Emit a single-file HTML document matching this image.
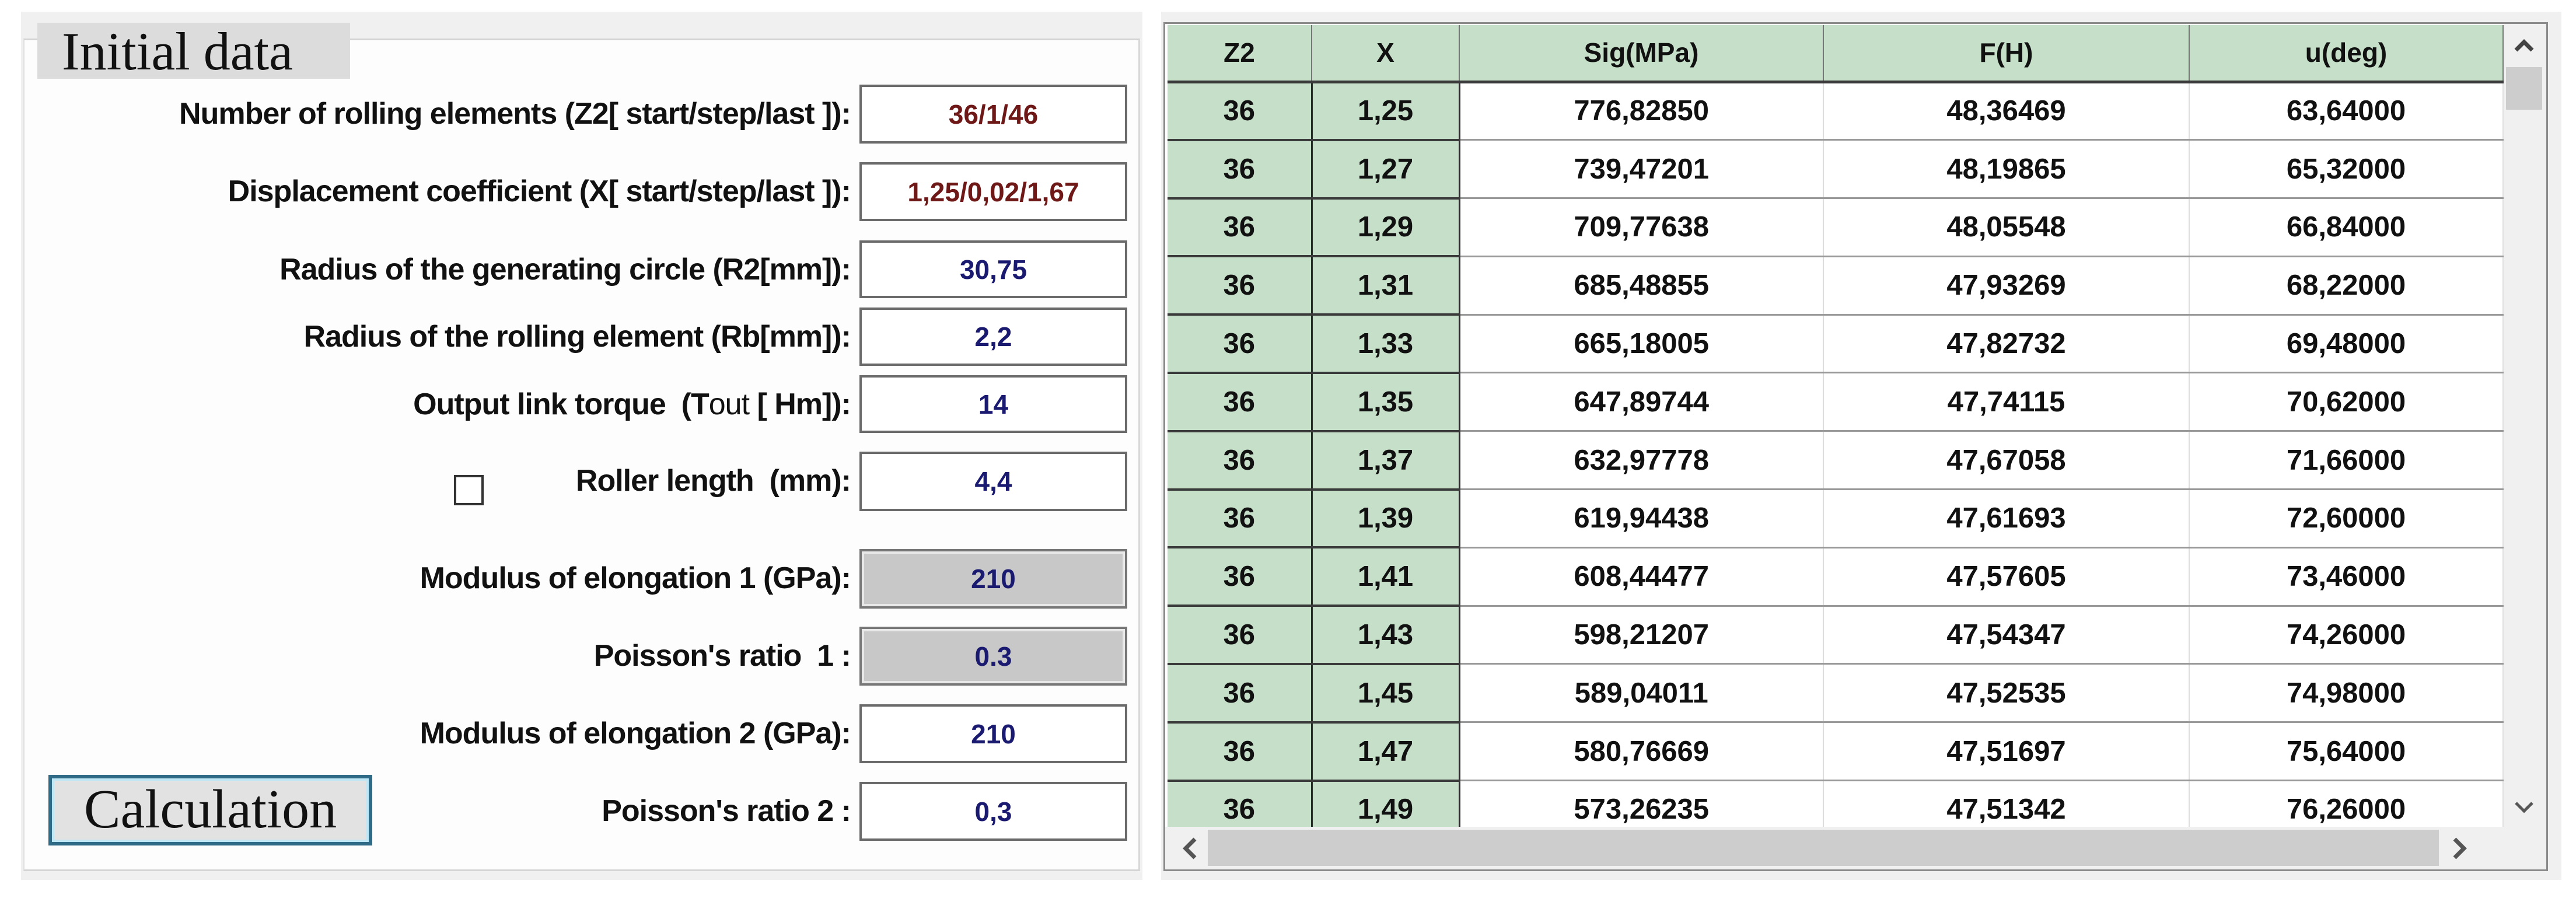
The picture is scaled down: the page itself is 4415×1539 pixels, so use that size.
<!DOCTYPE html>
<html><head><meta charset="utf-8"><style>
*{margin:0;padding:0;box-sizing:border-box}
body{width:4415px;height:1539px;background:#fff;position:relative;overflow:hidden;font-family:"Liberation Sans",sans-serif}
.a{position:absolute}
.lbl{position:absolute;right:2957px;font-weight:bold;font-size:52px;color:#111;white-space:nowrap;text-align:right;line-height:100px;letter-spacing:-1px}
.inp{position:absolute;left:1473px;width:459px;border:4px solid #6a6a6a;background:#fff;text-align:center;font-weight:bold;font-size:46px;color:#1a1a70;display:flex;align-items:center;justify-content:center}
.red{color:#6e1818}
.gray{background:#c8c8c8;border-color:#777;box-shadow:inset 0 0 0 4px #e8e8e8}
table{border-collapse:collapse;position:absolute;left:2001px;top:43px;table-layout:fixed}
td{height:99.8px;text-align:center;font-weight:bold;font-size:49px;color:#111;border-bottom:3px solid #999;border-right:2px solid #ddd;padding:0}
tr td:nth-child(1),tr td:nth-child(2){background:#c6dfc8;border-bottom:4px solid #3a3a3a;border-right:3px solid #2a2a2a}
tr.h td{background:#c6dfc8;height:97px;border-bottom:5px solid #3a3a3a;border-right:2px solid #777;font-size:46px}
</style></head><body>
<!-- left panel -->
<div class="a" style="left:36px;top:20px;width:1922px;height:1488px;background:#f0f0f0"></div>
<div class="a" style="left:40px;top:66px;width:1914px;height:1427px;background:#fdfdfd;border-top:3px solid #d4d4d4;border-bottom:3px solid #d4d4d4;border-right:3px solid #d8d8d8;border-left:2px solid #e0e0e0"></div>
<div class="a" style="left:64px;top:39px;width:536px;height:96px;background:#dcdcdc"></div>
<div class="a" style="left:106px;top:42px;font-family:'Liberation Serif',serif;font-size:92px;color:#111;line-height:1">Initial data</div>

<div class="lbl" style="top:145px">Number of rolling elements (Z2[ start/step/last ]):</div>
<div class="inp red" style="top:145px;height:101px">36/1/46</div>
<div class="lbl" style="top:278px">Displacement coefficient (X[ start/step/last ]):</div>
<div class="inp red" style="top:278px;height:101px">1,25/0,02/1,67</div>
<div class="lbl" style="top:412px">Radius of the generating circle (R2[mm]):</div>
<div class="inp" style="top:412px;height:99px">30,75</div>
<div class="lbl" style="top:527px">Radius of the rolling element (Rb[mm]):</div>
<div class="inp" style="top:527px;height:100px">2,2</div>
<div class="lbl" style="top:643px">Output link torque &nbsp;(T<span style="font-weight:normal">out</span> [ Hm]):</div>
<div class="inp" style="top:643px;height:99px">14</div>
<div class="a" style="left:778px;top:814px;width:51px;height:52px;border:4px solid #333;background:#fff"></div>
<div class="lbl" style="top:774px">Roller length &nbsp;(mm):</div>
<div class="inp" style="top:774px;height:102px">4,4</div>
<div class="lbl" style="top:941px">Modulus of elongation 1 (GPa):</div>
<div class="inp gray" style="top:941px;height:102px">210</div>
<div class="lbl" style="top:1074px">Poisson's ratio &nbsp;1 :</div>
<div class="inp gray" style="top:1074px;height:101px">0.3</div>
<div class="lbl" style="top:1207px">Modulus of elongation 2 (GPa):</div>
<div class="inp" style="top:1207px;height:101px">210</div>
<div class="lbl" style="top:1340px">Poisson's ratio 2 :</div>
<div class="inp" style="top:1340px;height:101px">0,3</div>
<div class="a" style="left:83px;top:1328px;width:555px;height:121px;border:6px solid #2f6b86;background:#e2e2e2;box-shadow:inset 0 0 0 4px #bfe6f5;font-family:'Liberation Serif',serif;font-size:94px;color:#111;text-align:center;line-height:106px">Calculation</div>

<!-- right panel -->
<div class="a" style="left:1990px;top:20px;width:2400px;height:1488px;background:#f0f0f0"></div>
<div class="a" style="left:1994px;top:38px;width:2373px;height:1455px;background:#fff;border:3px solid #8a8a8a"></div>
<table>
<colgroup><col style="width:247px"><col style="width:253px"><col style="width:624px"><col style="width:627px"><col style="width:538px"></colgroup>
<tr class="h"><td>Z2</td><td>X</td><td>Sig(MPa)</td><td>F(H)</td><td>u(deg)</td></tr>
<tr><td>36</td><td>1,25</td><td>776,82850</td><td>48,36469</td><td>63,64000</td></tr>
<tr><td>36</td><td>1,27</td><td>739,47201</td><td>48,19865</td><td>65,32000</td></tr>
<tr><td>36</td><td>1,29</td><td>709,77638</td><td>48,05548</td><td>66,84000</td></tr>
<tr><td>36</td><td>1,31</td><td>685,48855</td><td>47,93269</td><td>68,22000</td></tr>
<tr><td>36</td><td>1,33</td><td>665,18005</td><td>47,82732</td><td>69,48000</td></tr>
<tr><td>36</td><td>1,35</td><td>647,89744</td><td>47,74115</td><td>70,62000</td></tr>
<tr><td>36</td><td>1,37</td><td>632,97778</td><td>47,67058</td><td>71,66000</td></tr>
<tr><td>36</td><td>1,39</td><td>619,94438</td><td>47,61693</td><td>72,60000</td></tr>
<tr><td>36</td><td>1,41</td><td>608,44477</td><td>47,57605</td><td>73,46000</td></tr>
<tr><td>36</td><td>1,43</td><td>598,21207</td><td>47,54347</td><td>74,26000</td></tr>
<tr><td>36</td><td>1,45</td><td>589,04011</td><td>47,52535</td><td>74,98000</td></tr>
<tr><td>36</td><td>1,47</td><td>580,76669</td><td>47,51697</td><td>75,64000</td></tr>
<tr><td>36</td><td>1,49</td><td>573,26235</td><td>47,51342</td><td>76,26000</td></tr>
</table>
<div class="a" style="left:1997px;top:1417px;width:2367px;height:73px;background:#f0f0f0"></div>
<div class="a" style="left:2070px;top:1422px;width:2110px;height:62px;background:#cdcdcd"></div>
<svg class="a" style="left:2020px;top:1432px" width="40" height="44"><path d="M28 6 L12 22 L28 38" fill="none" stroke="#555" stroke-width="7"/></svg>
<svg class="a" style="left:4195px;top:1432px" width="40" height="44"><path d="M12 6 L28 22 L12 38" fill="none" stroke="#555" stroke-width="7"/></svg>
<div class="a" style="left:4292px;top:41px;width:72px;height:1376px;background:#f0f0f0"></div>
<div class="a" style="left:4295px;top:115px;width:62px;height:73px;background:#cdcdcd"></div>
<svg class="a" style="left:4308px;top:62px" width="36" height="30"><path d="M4 24 L18 10 L32 24" fill="none" stroke="#444" stroke-width="7"/></svg>
<svg class="a" style="left:4308px;top:1370px" width="36" height="30"><path d="M4 6 L18 20 L32 6" fill="none" stroke="#555" stroke-width="5"/></svg>
</body></html>
